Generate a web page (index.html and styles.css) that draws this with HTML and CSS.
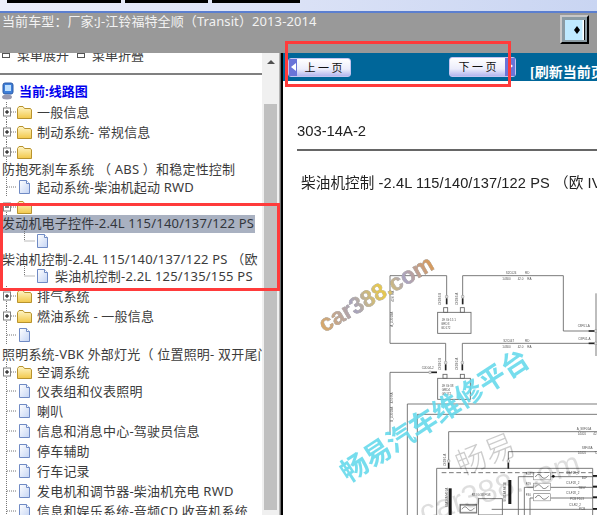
FILE: index.html
```html
<!DOCTYPE html>
<html lang="zh">
<head>
<meta charset="utf-8">
<title>线路图</title>
<link rel="stylesheet" href="styles.css">
</head>
<body>
<svg class="defs" aria-hidden="true">
  <defs>
    <linearGradient id="fg" x1="0" y1="0" x2="0" y2="1"><stop offset="0" stop-color="#fff6c8"/><stop offset="1" stop-color="#f2c84a"/></linearGradient>
    <linearGradient id="dg" x1="0" y1="0" x2="1" y2="1"><stop offset="0" stop-color="#fff"/><stop offset="1" stop-color="#c4d4f4"/></linearGradient>
    <linearGradient id="wm" x1="0" y1="0" x2="1" y2="0"><stop offset="0" stop-color="#d8a868"/><stop offset=".3" stop-color="#a8a4bc"/><stop offset=".55" stop-color="#e6c850"/><stop offset=".75" stop-color="#aaa4c0"/><stop offset="1" stop-color="#d89a58"/></linearGradient>
    <symbol id="plus" viewBox="0 0 14 20"><path d="M3.5 0V5M3.5 15V20M8 10H14" stroke="#777" stroke-dasharray="1 1" fill="none"/><rect x=".5" y="6" width="7" height="8" fill="#fff" stroke="#808080"/><path d="M2 10H6M4 8V12" stroke="#000"/></symbol>
    <symbol id="minus" viewBox="0 0 14 20"><path d="M3.5 15V20M8 10H14" stroke="#777" stroke-dasharray="1 1" fill="none"/><rect x=".5" y="6" width="7" height="8" fill="#fff" stroke="#808080"/><path d="M2 10H6" stroke="#000"/></symbol>
    <symbol id="tee" viewBox="0 0 14 20"><path d="M3.5 0V20M4 10H14" stroke="#777" stroke-dasharray="1 1" fill="none"/></symbol>
    <symbol id="ell" viewBox="0 0 14 20"><path d="M3.5 0V10H14" stroke="#777" stroke-dasharray="1 1" fill="none"/></symbol>
    <symbol id="folder" viewBox="0 0 15 16"><path d="M.5 4.5L2 2.5H6L7.5 4.5H13.5L14.5 6V14.5H.5Z" fill="url(#fg)" stroke="#b8932e"/></symbol>
    <symbol id="doc" viewBox="0 0 15 16"><path d="M2.5 1.5H9.5L12.5 4.5V14.5H2.5Z" fill="url(#dg)" stroke="#6f8ac4"/><path d="M9.5 1.5V4.5H12.5" fill="#fff" stroke="#6f8ac4"/></symbol>
    <symbol id="pin" viewBox="0 0 12 32"><circle cx="6" cy="5" r="4.5" fill="#ddd" stroke="#555"/><rect x="3.5" y="10" width="5" height="18" fill="#222"/></symbol>
    <symbol id="pinh" viewBox="0 0 32 12"><circle cx="27" cy="6" r="4.5" fill="#ddd" stroke="#555"/><rect x="6" y="3.5" width="17" height="5" fill="#222"/></symbol>
    <symbol id="fuse" viewBox="0 0 52 24"><rect x="1" y="1" width="50" height="22" fill="#fff" stroke="#555" stroke-width="2"/><path d="M6 14C12 4 18 4 24 12S36 20 46 9" fill="none" stroke="#444" stroke-width="2"/></symbol>
  </defs>
</svg>
<div class="app">
  <div class="tabstrip">
    <span class="tab tab-a"></span><span class="tab tab-b"></span><span class="tab tab-c"></span>
  </div>
  <header class="carbar">
    <span class="cartext">当前车型：厂家:J-江铃福特全顺（Transit）2013-2014</span>
    <button class="toggle" type="button" aria-label="切换">
      <svg class="toggle-icon" viewBox="0 0 20 20"><rect width="20" height="20" fill="#bfeaff"/><rect x="17.5" width="1.5" height="20" fill="#fff"/><rect x="19" width="1" height="20" fill="#111"/><path d="M9 10L12 6L15 10L12 14Z" fill="#000"/></svg>
    </button>
  </header>
  <main class="main">
    <aside class="side">
      <div class="side-body">
        <div class="menu">
          <span class="menu-item"><i class="menu-box"></i>菜单展开</span>
          <span class="menu-item"><i class="menu-box"></i>菜单折叠</span>
        </div>
        <nav class="tree">
          <div class="current">
            <svg class="pc" viewBox="0 0 13 18"><rect x="2" y="1" width="10" height="11" rx="2" fill="#3f7fd8" stroke="#2a5aa8"/><rect x="4" y="3" width="6" height="6" fill="#bfe0ff"/><ellipse cx="6" cy="15" rx="5" ry="2.5" fill="#9a9ab0"/></svg>
            <span>当前:线路图</span>
          </div>
          <div class="row gap5"><svg class="tw"><use href="#plus"/></svg><svg class="ic"><use href="#folder"/></svg><span>一般信息</span></div>
          <div class="row"><svg class="tw"><use href="#plus"/></svg><svg class="ic"><use href="#folder"/></svg><span>制动系统- 常规信息</span></div>
          <div class="row"><svg class="tw"><use href="#plus"/></svg><svg class="ic"><use href="#folder"/></svg></div>
          <div class="row text g1"><span>防抱死刹车系统 （ ABS ）和稳定性控制</span></div>
          <div class="row g2"><svg class="tw"><use href="#tee"/></svg><svg class="ic"><use href="#doc"/></svg><span>起动系统-柴油机起动 RWD</span></div>
          <div class="row"><svg class="tw"><use href="#minus"/></svg><svg class="ic"><use href="#folder"/></svg></div>
          <div class="row text g1"><span class="selected">发动机电子控件-2.4L 115/140/137/122 PS</span></div>
          <div class="row sub g1"><svg class="tw"><use href="#ell"/></svg><svg class="ic"><use href="#doc"/></svg></div>
          <div class="row text g2"><span>柴油机控制-2.4L 115/140/137/122 PS （欧</span></div>
          <div class="row sub g1"><svg class="tw"><use href="#ell"/></svg><svg class="ic"><use href="#doc"/></svg><span>柴油机控制-2.2L 125/135/155 PS</span></div>
          <div class="row"><svg class="tw"><use href="#plus"/></svg><svg class="ic"><use href="#folder"/></svg><span>排气系统</span></div>
          <div class="row"><svg class="tw"><use href="#plus"/></svg><svg class="ic"><use href="#folder"/></svg><span>燃油系统 - 一般信息</span></div>
          <div class="row g3"><svg class="tw"><use href="#tee"/></svg><svg class="ic"><use href="#doc"/></svg></div>
          <div class="row text g3"><span>照明系统-VBK 外部灯光（ 位置照明- 双开尾门</span></div>
          <div class="row g2"><svg class="tw"><use href="#plus"/></svg><svg class="ic"><use href="#folder"/></svg><span>空调系统</span></div>
          <div class="row g3"><svg class="tw"><use href="#tee"/></svg><svg class="ic"><use href="#doc"/></svg><span>仪表组和仪表照明</span></div>
          <div class="row"><svg class="tw"><use href="#tee"/></svg><svg class="ic"><use href="#doc"/></svg><span>喇叭</span></div>
          <div class="row"><svg class="tw"><use href="#tee"/></svg><svg class="ic"><use href="#doc"/></svg><span>信息和消息中心-驾驶员信息</span></div>
          <div class="row"><svg class="tw"><use href="#tee"/></svg><svg class="ic"><use href="#doc"/></svg><span>停车辅助</span></div>
          <div class="row"><svg class="tw"><use href="#tee"/></svg><svg class="ic"><use href="#doc"/></svg><span>行车记录</span></div>
          <div class="row"><svg class="tw"><use href="#tee"/></svg><svg class="ic"><use href="#doc"/></svg><span>发电机和调节器-柴油机充电 RWD</span></div>
          <div class="row"><svg class="tw"><use href="#tee"/></svg><svg class="ic"><use href="#doc"/></svg><span>信息和娱乐系统-音频CD 收音机系统</span></div>
        </nav>
      </div>
      <div class="scrollbar">
        <span class="scroll-up"></span>
        <span class="scroll-thumb"></span>
      </div>
    </aside>
    <div class="splitter"></div>
    <section class="content">
      <div class="pager">
        <button class="page-btn prev" type="button"><span class="cap cap-l"></span><span class="page-label">上 一 页</span></button>
        <button class="page-btn next" type="button"><span class="page-label">下 一 页</span><span class="cap cap-r"></span></button>
        <span class="refresh">[刷新当前页</span>
      </div>
      <article class="sheet">
        <div class="sheet-code">303-14A-2</div>
        <div class="sheet-rule"></div>
        <h1 class="sheet-title">柴油机控制 -2.4L 115/140/137/122 PS （欧 IV）</h1>
        <svg class="diagram" viewBox="0 0 936 855">
          <g class="wire">
            <path d="M485 200V137H315V340H482V395"/>
            <path d="M533 200V137H835V303H912"/>
            <path d="M532 395V340H912"/>
            <path d="M432 427H315V615"/>
            <path d="M933 190V378"/>
            <path d="M367 855V522H936"/>
            <path d="M397 855V553H936"/>
            <path d="M491 690V605H936"/>
            <path d="M670 690V665H936"/>
            <path d="M455 855V715H923V855"/>
            <rect x="458" y="247" width="100" height="63"/>
            <rect x="476" y="233" width="12" height="14"/>
            <rect x="526" y="233" width="12" height="14"/>
            <rect x="458" y="445" width="98" height="63"/>
            <rect x="474" y="433" width="12" height="12"/>
            <rect x="526" y="433" width="12" height="12"/>
            <rect x="580" y="806" width="72" height="49"/>
            <rect x="525" y="823" width="50" height="26"/>
            <path d="M700 855V740H745M797 740H936M718 855V772H745M797 772H936M735 855V804H745M797 804H936M620 838H936"/>
          </g>
          <path class="dash" d="M470 728H923"/>
          <use href="#pin" x="479" y="195" width="12" height="32"/>
          <use href="#pin" x="527" y="195" width="12" height="32"/>
          <use href="#pin" x="476" y="393" width="12" height="32"/>
          <use href="#pin" x="526" y="393" width="12" height="32"/>
          <use href="#pin" x="485" y="688" width="12" height="32"/>
          <use href="#pin" x="664" y="688" width="12" height="32"/>
          <use href="#pinh" x="905" y="297" width="32" height="12"/>
          <use href="#pinh" x="905" y="334" width="32" height="12"/>
          <use href="#pinh" x="430" y="421" width="32" height="12" transform="rotate(180 446 427)"/>
          <use href="#fuse" x="745" y="727" width="52" height="24"/>
          <use href="#fuse" x="745" y="758" width="52" height="24"/>
          <use href="#fuse" x="745" y="790" width="52" height="24"/>
          <use href="#fuse" x="525" y="823" width="50" height="26"/>
          <circle cx="805" cy="739" r="4" fill="#111"/>
          <rect class="bus" x="491" y="775" width="9" height="80"/>
          <rect class="bus" x="670" y="750" width="9" height="72"/>
          <rect class="bus" x="924" y="735" width="12" height="5"/>
          <rect class="bus" x="924" y="767" width="12" height="5"/>
          <rect class="bus" x="924" y="799" width="12" height="5"/>
          <rect class="bus" x="924" y="834" width="12" height="5"/>
          <g class="lb">
            <text x="662" y="131">S2C024</text><text x="720" y="131">RD</text>
            <text x="652" y="150">14300</text><text x="698" y="150">42.0</text><text x="727" y="150">RA</text>
            <text x="470" y="272">JE IG:15 1</text><text x="468" y="284">GRD3</text><text x="468" y="296">GD172</text>
            <text x="878" y="290">C8P01-A</text><text x="880" y="329">C8P01-A</text>
            <text x="655" y="335">S2C047</text><text x="720" y="335">RD</text>
            <text x="652" y="353">14300</text><text x="698" y="353">42.0</text><text x="727" y="353">RA</text>
            <text x="410" y="416">C0D04-2</text>
            <text x="470" y="470">JE IG:38</text><text x="470" y="482">GRD4</text><text x="470" y="494">GD172</text>
            <text x="875" y="600">A_S8F01A</text><text x="878" y="616">14401</text><text x="925" y="616">42</text>
            <text x="890" y="658">S8F03A</text><text x="878" y="672">14401</text><text x="928" y="672">T2</text>
            <text x="722" y="735">F28</text><text x="722" y="765">F29</text><text x="722" y="797">F30</text>
            <text x="843" y="733">C3-F28_2</text><text x="843" y="763">C3-F28_2</text><text x="843" y="793">C3-F28_2</text><text x="852" y="827">C3-R2_2</text>
            <text x="890" y="748">B1F</text><text x="880" y="778">TB9Y</text><text x="855" y="809">PCB F103</text><text x="882" y="840">PCB</text>
            <text x="560" y="798">R8 IG:38 PG8</text>
            <text x="0" y="0" transform="translate(325 290) rotate(-90)">A_U201BA</text>
            <text x="0" y="0" transform="translate(327 215) rotate(-90)">42.0 RA</text>
            <text x="0" y="0" transform="translate(325 575) rotate(-90)">B_U201BA</text>
            <text x="0" y="0" transform="translate(325 520) rotate(-90)">42.0 RA</text>
            <text x="0" y="0" transform="translate(468 225) rotate(-90)">C0D03-B</text>
            <text x="0" y="0" transform="translate(520 225) rotate(-90)">C0D03-A</text>
            <text x="0" y="0" transform="translate(468 420) rotate(-90)">C0D02-B</text>
            <text x="0" y="0" transform="translate(520 420) rotate(-90)">C0D02-A</text>
            <text x="0" y="0" transform="translate(482 708) rotate(-90)">C0D01-A</text>
            <text x="0" y="0" transform="translate(488 832) rotate(-90)">S6A14A M01A</text>
            <text x="0" y="0" transform="translate(663 815) rotate(-90)">S6B14A M01B</text>
          </g>
          <g class="mark-grey">
            <text x="0" y="0" transform="translate(528 738) rotate(-22)">畅易</text>
          </g>
          <g class="mark-latin-grey">
            <text x="0" y="0" transform="translate(415 880) rotate(-18)">car388.com</text>
          </g>
          <text class="mark-site" x="0" y="0" transform="translate(118 308) rotate(-30)">car388.com</text>
          <text class="mark-main" x="0" y="0" transform="translate(190 760) rotate(-33)">畅易汽车维修平台</text>
        </svg>
      </article>
    </section>
  </main>
  <div class="callout callout-pager"></div>
  <div class="callout callout-tree"></div>
</div>
</body>
</html>
```

FILE: styles.css
```css
* { box-sizing: border-box; }
html, body { margin: 0; height: 100%; overflow: hidden; background: #fff; }
.defs { position: absolute; width: 0; height: 0; }
.app {
  position: relative;
  width: 597px;
  height: 515px;
  display: flex;
  flex-direction: column;
  overflow: hidden;
  font-family: "Noto Sans", "Noto Sans CJK SC", sans-serif;
  font-size: 13px;
  color: #3c3c3c;
}
.tabstrip {
  height: 13px;
  flex: none;
  display: flex;
  gap: 4px;
  padding-left: 7px;
  background: linear-gradient(90deg, #eceefa, #c9d5f2);
  border-bottom: 2px solid #5b7fd0;
}
.tab { height: 3px; background: #000; }
.tab-a { width: 114px; }
.tab-b { width: 83px; }
.tab-c { width: 88px; }
.carbar {
  height: 40px;
  flex: none;
  display: flex;
  justify-content: space-between;
  align-items: flex-start;
  padding: 2px 8px 0 2px;
  background: #999;
}
.cartext { margin-top: -2px; font-size: 13px; line-height: 16px; letter-spacing: .1px; color: #f2f2f2; white-space: nowrap; }
.toggle {
  width: 29px;
  height: 29px;
  padding: 0;
  display: flex;
  align-items: center;
  justify-content: center;
  background: #8b9ba3;
  border: 2px solid;
  border-color: #c8c8c8 #000 #000 #c8c8c8;
}
.toggle-icon { width: 20px; height: 20px; display: block; }
.main { flex: 1; min-height: 0; display: flex; }
.side { width: 279px; flex: none; display: flex; overflow: hidden; }
.side-body { width: 262px; flex: none; overflow: hidden; letter-spacing: .2px; }
.menu {
  height: 26px;
  margin-top: -6px;
  display: flex;
  gap: 8px;
  padding-left: 2px;
  line-height: 16px;
  letter-spacing: 0;
}
.menu-item { display: flex; white-space: nowrap; }
.menu-box {
  width: 8px;
  height: 8px;
  margin: 3px 7px 0 0;
  border: 1px solid #555;
  background: linear-gradient(#fff 40%, #555 40%, #555 55%, #fff 55%);
}
.tree {
  border-top: 2px solid #808080;
  padding-top: 8px;
  height: 450px;
  overflow: hidden;
}
.current {
  height: 16px;
  display: flex;
  align-items: center;
  gap: 5px;
  padding-left: 1px;
  font-weight: 700;
  color: #0000ee;
  white-space: nowrap;
  letter-spacing: 0;
}
.pc { width: 13px; height: 18px; flex: none; }
.row {
  height: 16px;
  margin-top: 4px;
  display: flex;
  align-items: center;
  padding-left: 3px;
  white-space: nowrap;
}
.row > span, .current > span { margin-bottom: 2px; }
.gap5 { margin-top: 5px; }
.g1 { margin-top: 1px; }
.g2 { margin-top: 2px; }
.g3 { margin-top: 3px; }
.row.text { padding-left: 2px; }
.row.sub { padding-left: 21px; }
.tw { width: 14px; height: 20px; flex: none; margin: -2px 0; overflow: visible; }
.ic { width: 15px; height: 16px; flex: none; margin-right: 5px; }
.row > .selected { display: block; width: 253px; height: 18px; margin: 0; line-height: 16px; background: #a9b1c1; color: #33363c; }
.scrollbar {
  position: relative;
  width: 17px;
  flex: none;
  background: #f0f0f0;
}
.scroll-up {
  position: absolute;
  left: 5px;
  top: 7px;
  border: 4px solid transparent;
  border-top: 0;
  border-bottom: 4px solid #505050;
}
.scroll-thumb {
  position: absolute;
  left: 2px;
  top: 51px;
  width: 13px;
  height: 406px;
  background: #c0c0c0;
}
.splitter {
  width: 4px;
  flex: none;
  background: linear-gradient(90deg, #b4b4b4 0 1px, #707070 1px 2px, #000 2px);
}
.content { flex: 1; min-width: 0; display: flex; flex-direction: column; overflow: hidden; }
.pager {
  height: 28px;
  flex: none;
  display: flex;
  align-items: flex-start;
  padding: 5px 0 0 5px;
  background: #006699;
  white-space: nowrap;
}
.page-btn {
  height: 19px;
  flex: none;
  padding: 0;
  display: flex;
  align-items: stretch;
  border: 1px solid #c4c4f0;
  border-radius: 3px;
  background: linear-gradient(180deg, #fff, #ecedfb 60%, #b4b6ee);
  font-family: "Noto Sans CJK SC", sans-serif;
  font-size: 11px;
  color: #111;
}
.prev { width: 63px; }
.next { width: 67px; height: 20px; margin: -1px 0 0 98px; }
.page-label { flex: 1; line-height: 17px; text-align: center; }
.cap { width: 8px; flex: none; position: relative; background: #6a74d8; }
.cap-r { width: 10px; }
.cap::after {
  content: "";
  position: absolute;
  top: 4px;
  border: 4px solid transparent;
}
.cap-l::after { left: -2px; border-right: 5px solid #fff; }
.cap-r::after { left: 3px; border-left: 5px solid #fff; }
.refresh {
  margin: 7px 0 0 14px;
  font-family: "Liberation Serif", "Noto Sans CJK SC", serif;
  font-size: 14px;
  line-height: 16px;
  font-weight: 700;
  color: #fff;
}
.sheet { flex: 1; min-height: 0; font-family: "Liberation Sans", "Noto Sans CJK SC", sans-serif; color: #222; }
.sheet-code { margin: 41px 0 0 14px; font-size: 14.8px; line-height: 18px; filter: blur(.3px); }
.sheet-rule { height: 2px; margin: 9px 0 0 14px; background: #666; }
.sheet-title {
  margin: 23px 0 0 18px;
  font-size: 14.6px;
  line-height: 18px;
  font-weight: 400;
  letter-spacing: .1px;
  white-space: nowrap;
  filter: blur(.3px);
}
.diagram {
  display: block;
  width: 312px;
  height: 285px;
  margin: 38px 0 0 2px;
  filter: blur(.35px);
}
.wire { fill: none; stroke: #666; stroke-width: 2.6; }
.dash { fill: none; stroke: #555; stroke-width: 2.4; stroke-dasharray: 14 8; }
.bus { fill: #1a1a1a; }
.lb { font-family: "Liberation Sans", sans-serif; font-size: 9px; fill: #555; }
.mark-grey { font-family: "Noto Sans CJK SC", sans-serif; font-size: 92px; font-weight: 300; fill: #000; fill-opacity: .2; }
.mark-latin-grey { font-family: "Liberation Sans", sans-serif; font-size: 96px; fill: #000; fill-opacity: .13; }
.mark-site { font-family: "Liberation Sans", sans-serif; font-size: 70px; font-weight: 700; fill: url(#wm); stroke: #8f8f8f; stroke-width: 1.5; paint-order: stroke; }
.mark-main { font-family: "Noto Sans CJK SC", sans-serif; font-size: 82px; font-weight: 700; fill: #63d8ea; fill-opacity: .88; }
.callout { position: absolute; border: 3px solid #ff3b3b; pointer-events: none; }
.callout-pager { left: 285px; top: 41px; width: 226px; height: 46px; }
.callout-tree { left: 0; top: 203px; width: 280px; height: 88px; }
```
